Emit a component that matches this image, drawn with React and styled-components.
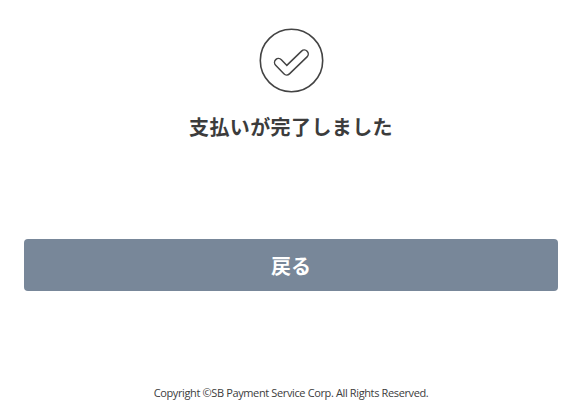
import styled, { createGlobalStyle } from "styled-components"

const Global = createGlobalStyle`
    html, body {
        margin: 0;
        padding: 0;
        background: #fff;
    }
    body {
        font-family: "Open Sans", "Noto Sans CJK JP", sans-serif;
        color: #3c3c3c;
    }
`

const Page = styled.main`
    height: 415px;
    display: flex;
    flex-direction: column;
    align-items: center;
    padding: 28px 25px 0 24px;
    box-sizing: border-box;
`

const Icon = styled.svg`
    display: block;
    width: 65px;
    height: 65px;
    flex-shrink: 0;
`

const Title = styled.h1`
    margin: 19px 0 0;
    font-family: "Noto Sans CJK JP", sans-serif;
    font-size: 20px;
    line-height: 30px;
    font-weight: 700;
    letter-spacing: 0.4px;
    color: #3c3c3c;
`

const BackButton = styled.button`
    margin-top: 97px;
    width: 100%;
    height: 52px;
    flex-shrink: 0;
    border: none;
    border-radius: 4px;
    background: #788799;
    color: #fff;
    font-family: "Noto Sans CJK JP", sans-serif;
    font-size: 20px;
    font-weight: 700;
    padding: 0;
`

const Copyright = styled.footer`
    margin-top: 93px;
    font-size: 11px;
    line-height: 18px;
    letter-spacing: -0.37px;
    color: #3c3c3c;
`

export default function App() {
    return (
        <Page>
            <Global />
            <Icon viewBox="0 0 65 65" fill="none">
                <circle cx="32.5" cy="32.5" r="31.2" stroke="#444" strokeWidth="1.6" />
                <polyline
                    points="19.5,34.5 27.7,43 45.3,26"
                    stroke="#444"
                    strokeWidth="9.4"
                    strokeLinecap="round"
                    strokeLinejoin="round"
                />
                <polyline
                    points="19.5,34.5 27.7,43 45.3,26"
                    stroke="#fff"
                    strokeWidth="6.4"
                    strokeLinecap="round"
                    strokeLinejoin="round"
                />
            </Icon>
            <Title>支払いが完了しました</Title>
            <BackButton type="button">戻る</BackButton>
            <Copyright>Copyright ©SB Payment Service Corp. All Rights Reserved.</Copyright>
        </Page>
    )
}
